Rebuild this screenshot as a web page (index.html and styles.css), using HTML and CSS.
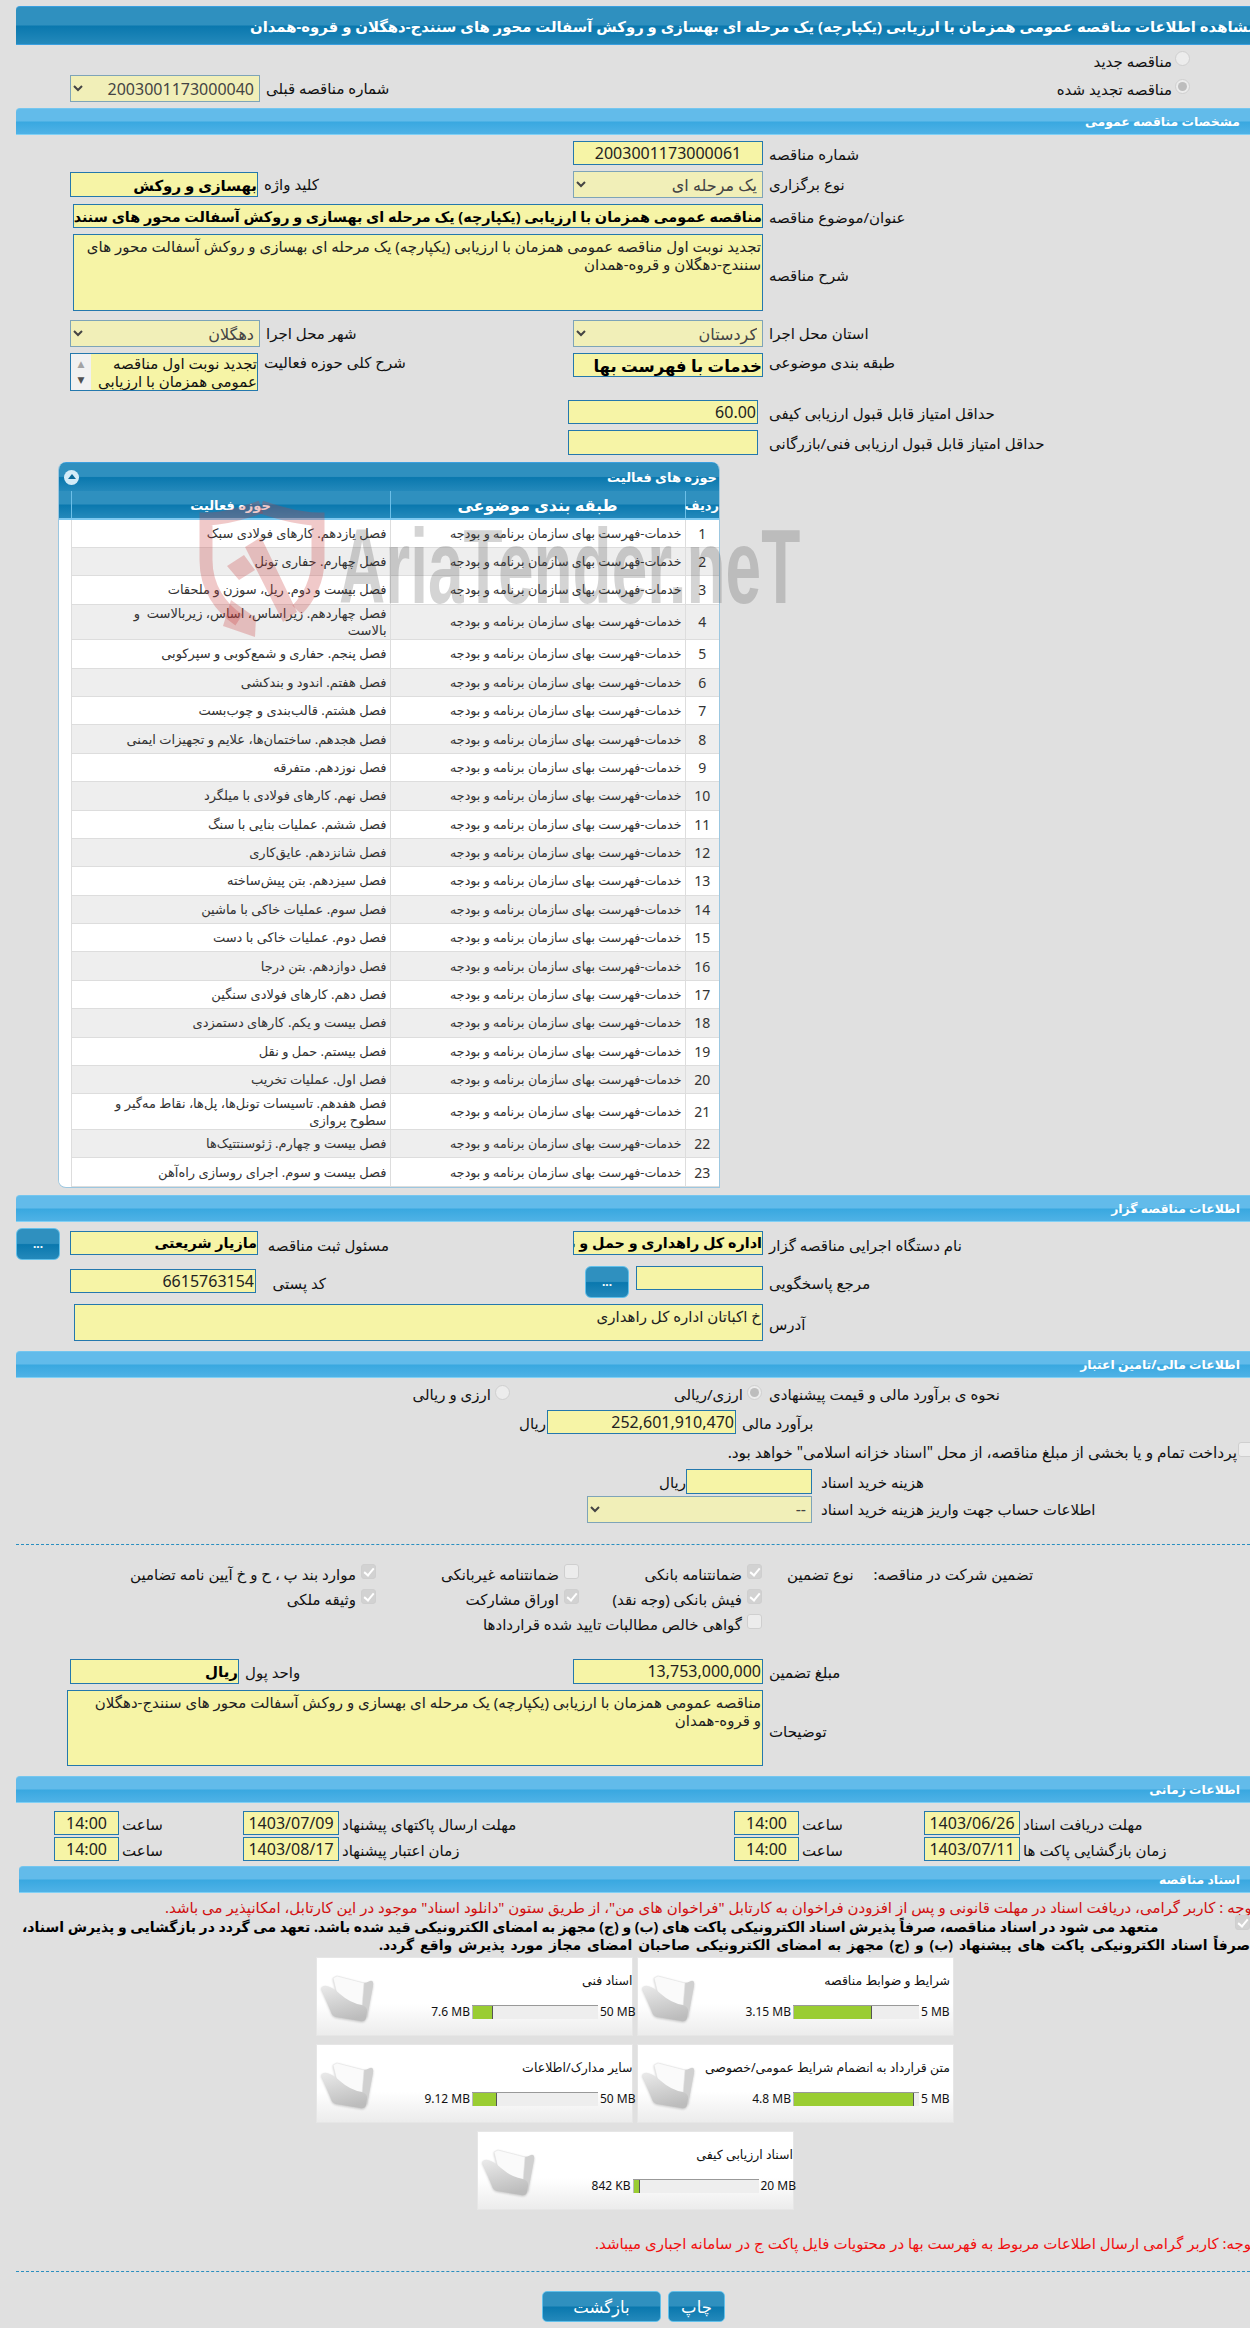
FILE: index.html
```html
<!DOCTYPE html>
<html lang="fa">
<head>
    <meta charset="UTF-8">
    <title>مشاهده اطلاعات مناقصه</title>
    <link rel="stylesheet" href="styles.css">
</head>
<body>

    <svg class="sprite" width="0" height="0">
        <defs>
            <linearGradient id="flap" x1="0.2" y1="0" x2="0.5" y2="1">
                <stop offset="0" stop-color="#e8e8e8"/>
                <stop offset="1" stop-color="#bcbcbc"/>
            </linearGradient>
        </defs>
        <symbol id="folder" viewBox="0 0 54 48">
            <path d="M18 3 L42 9 Q47 9 50 7 Q54 6 53 12 L47 44 L36 30 Z" fill="#d0d0d0"/>
            <path d="M13 4 L17 2 L44 9 L42 33 L18 24 Z" fill="#fafafa" stroke="#e2e2e2" stroke-width=".6"/>
            <path d="M1 14 Q3 11 7 12 Q14 14 20 20 Q30 29 42 31 Q48 33 47 38 L46 44 Q45 48 40 47 L16 43 Q12 42 11 38 Z" fill="url(#flap)"/>
        </symbol>
    </svg>

    <!-- Watermark -->
    <div class="watermark">
        <svg class="wm-shield" width="126" height="140" viewBox="0 0 126 140">
            <path d="M62 7 C45 13 22 19 7 19 L7 60 C7 88 22 108 40 120" fill="none" stroke="#c83c3c" stroke-opacity=".28" stroke-width="13"/>
            <path d="M62 7 C80 13 102 19 119 19 L119 60 C119 80 110 98 98 110" fill="none" stroke="#c83c3c" stroke-opacity=".28" stroke-width="13"/>
            <path d="M28 66 L45 55 L56 70 L40 80 Z M46 47 L62 37 L98 112 L84 122 Z M32 100 L57 118 L56 137 L24 126 Z" fill="#c83c3c" fill-opacity=".28"/>
        </svg>
        <div class="wm-text">AriaTender.neT</div>
    </div>

    <!-- Title -->
    <div class="title-bar"><span>مشاهده اطلاعات مناقصه عمومی همزمان با ارزیابی (یکپارچه) یک مرحله ای بهسازی و روکش آسفالت محور های سنندج-دهگلان و قروه-همدان</span></div>

    <div class="renew">
        <div class="row renew-row">
            <div class="cell-full"><span class="txt">مناقصه جدید</span><input class="radio" type="radio" disabled></div>
        </div>
        <div class="row renew-row2">
            <div class="cell-l">
                <select class="fld w190" dir="rtl" disabled><option>2003001173000040</option></select>
                <span class="lbl">شماره مناقصه قبلی</span>
            </div>
            <div class="cell-full cell-renew"><span class="txt">مناقصه تجدید شده</span><input class="radio" type="radio" checked disabled></div>
        </div>
    </div>

    <!-- General -->
    <div class="section-bar">مشخصات مناقصه عمومی</div>
    <div class="fields">
        <div class="row">
            <div class="cell-l"></div>
            <div class="cell-m"><input class="fld w190 center" dir="rtl" value="2003001173000061" readonly></div>
            <span class="lbl">شماره مناقصه</span>
        </div>
        <div class="row">
            <div class="cell-l">
                <input class="fld w188 strong tall mt1" dir="rtl" value="بهسازی و روکش" readonly>
                <span class="lbl">کلید واژه</span>
            </div>
            <div class="cell-m"><select class="fld w190" dir="rtl" disabled><option>یک مرحله ای</option></select></div>
            <span class="lbl">نوع برگزاری</span>
        </div>
        <div class="row">
            <div class="cell-wide"><input class="fld wfull strong strong-sm" dir="rtl" value="مناقصه عمومی همزمان با ارزیابی (یکپارچه) یک مرحله ای بهسازی و روکش آسفالت محور های سنندج-دهگلان و قروه-همدان" readonly></div>
            <span class="lbl">عنوان/موضوع مناقصه</span>
        </div>
        <div class="row row-area">
            <div class="cell-wide"><textarea class="fld wfull area1" dir="rtl" readonly>تجدید نوبت اول مناقصه عمومی همزمان با ارزیابی (یکپارچه) یک مرحله ای بهسازی و روکش آسفالت محور های سنندج-دهگلان و قروه-همدان</textarea></div>
            <span class="lbl">شرح مناقصه</span>
        </div>
        <div class="row gap9">
            <div class="cell-l">
                <select class="fld w190" dir="rtl" disabled><option>دهگلان</option></select>
                <span class="lbl">شهر محل اجرا</span>
            </div>
            <div class="cell-m"><select class="fld w190" dir="rtl" disabled><option>کردستان</option></select></div>
            <span class="lbl">استان محل اجرا</span>
        </div>
        <div class="row">
            <div class="cell-l">
                <div class="listbox">
                    <div class="fake-scroll"><span class="up">▲</span><span>▼</span></div>
                    <div class="listbox-text">تجدید نوبت اول مناقصه<br>عمومی همزمان با ارزیابی</div>
                </div>
                <span class="lbl lbl-top">شرح کلی حوزه فعالیت</span>
            </div>
            <div class="cell-m"><input class="fld w190 strong strong-lg" dir="rtl" value="خدمات با فهرست بها" readonly></div>
            <span class="lbl lbl-top">طبقه بندی موضوعی</span>
        </div>
        <div class="row gap9">
            <div class="cell-score"><input class="fld w190" dir="rtl" value="60.00" readonly></div>
            <span class="lbl">حداقل امتیاز قابل قبول ارزیابی کیفی</span>
        </div>
        <div class="row">
            <div class="cell-score"><input class="fld w190 tall" dir="rtl" readonly></div>
            <span class="lbl">حداقل امتیاز قابل قبول ارزیابی فنی/بازرگانی</span>
        </div>
    </div>

    <!-- Activity table -->
    <div class="panel">
        <div class="panel-head">
            <span class="toggle"></span>
            <span class="panel-title">حوزه های فعالیت</span>
        </div>
        <table class="activity">
            <thead>
                <tr>
                    <th class="c-blank"></th>
                    <th class="c-act">حوزه فعالیت</th>
                    <th class="c-cat">طبقه بندی موضوعی</th>
                    <th class="c-num">ردیف</th>
                </tr>
            </thead>
            <tbody>
                <tr><td></td><td>فصل یازدهم. کارهای فولادی سبک</td><td>خدمات-فهرست بهای سازمان برنامه و بودجه</td><td>1</td></tr>
                <tr><td></td><td>فصل چهارم. حفاری تونل</td><td>خدمات-فهرست بهای سازمان برنامه و بودجه</td><td>2</td></tr>
                <tr><td></td><td>فصل بیست و دوم. ریل، سوزن و ملحقات</td><td>خدمات-فهرست بهای سازمان برنامه و بودجه</td><td>3</td></tr>
                <tr class="two"><td></td><td>فصل چهاردهم. زیراساس، اساس، زیربالاست &nbsp;و<br>بالاست</td><td>خدمات-فهرست بهای سازمان برنامه و بودجه</td><td>4</td></tr>
                <tr><td></td><td>فصل پنجم. حفاری و شمع‌کوبی و سپرکوبی</td><td>خدمات-فهرست بهای سازمان برنامه و بودجه</td><td>5</td></tr>
                <tr><td></td><td>فصل هفتم. اندود و بندکشی</td><td>خدمات-فهرست بهای سازمان برنامه و بودجه</td><td>6</td></tr>
                <tr><td></td><td>فصل هشتم. قالب‌بندی و چوب‌بست</td><td>خدمات-فهرست بهای سازمان برنامه و بودجه</td><td>7</td></tr>
                <tr><td></td><td>فصل هجدهم. ساختمان‌ها، علایم و تجهیزات ایمنی</td><td>خدمات-فهرست بهای سازمان برنامه و بودجه</td><td>8</td></tr>
                <tr><td></td><td>فصل نوزدهم. متفرقه</td><td>خدمات-فهرست بهای سازمان برنامه و بودجه</td><td>9</td></tr>
                <tr><td></td><td>فصل نهم. کارهای فولادی با میلگرد</td><td>خدمات-فهرست بهای سازمان برنامه و بودجه</td><td>10</td></tr>
                <tr><td></td><td>فصل ششم. عملیات بنایی با سنگ</td><td>خدمات-فهرست بهای سازمان برنامه و بودجه</td><td>11</td></tr>
                <tr><td></td><td>فصل شانزدهم. عایق‌کاری</td><td>خدمات-فهرست بهای سازمان برنامه و بودجه</td><td>12</td></tr>
                <tr><td></td><td>فصل سیزدهم. بتن پیش‌ساخته</td><td>خدمات-فهرست بهای سازمان برنامه و بودجه</td><td>13</td></tr>
                <tr><td></td><td>فصل سوم. عملیات خاکی با ماشین</td><td>خدمات-فهرست بهای سازمان برنامه و بودجه</td><td>14</td></tr>
                <tr><td></td><td>فصل دوم. عملیات خاکی با دست</td><td>خدمات-فهرست بهای سازمان برنامه و بودجه</td><td>15</td></tr>
                <tr><td></td><td>فصل دوازدهم. بتن درجا</td><td>خدمات-فهرست بهای سازمان برنامه و بودجه</td><td>16</td></tr>
                <tr><td></td><td>فصل دهم. کارهای فولادی سنگین</td><td>خدمات-فهرست بهای سازمان برنامه و بودجه</td><td>17</td></tr>
                <tr><td></td><td>فصل بیست و یکم. کارهای دستمزدی</td><td>خدمات-فهرست بهای سازمان برنامه و بودجه</td><td>18</td></tr>
                <tr><td></td><td>فصل بیستم. حمل و نقل</td><td>خدمات-فهرست بهای سازمان برنامه و بودجه</td><td>19</td></tr>
                <tr><td></td><td>فصل اول. عملیات تخریب</td><td>خدمات-فهرست بهای سازمان برنامه و بودجه</td><td>20</td></tr>
                <tr class="two"><td></td><td>فصل هفدهم. تاسیسات تونل‌ها، پل‌ها، نقاط مه‌گیر و<br>سطوح پروازی</td><td>خدمات-فهرست بهای سازمان برنامه و بودجه</td><td>21</td></tr>
                <tr><td></td><td>فصل بیست و چهارم. ژئوسنتتیک‌ها</td><td>خدمات-فهرست بهای سازمان برنامه و بودجه</td><td>22</td></tr>
                <tr><td></td><td>فصل بیست و سوم. اجرای روسازی راه‌آهن</td><td>خدمات-فهرست بهای سازمان برنامه و بودجه</td><td>23</td></tr>
            </tbody>
        </table>
    </div>

    <!-- Organizer -->
    <div class="section-bar bar-org">اطلاعات مناقصه گزار</div>
    <div class="org">
        <div class="row org-r1">
            <button class="dots btn-left">...</button>
            <input class="fld w188 strong strong-sm" dir="rtl" value="مازیار شریعتی" readonly>
            <span class="lbl lbl-org1">مسئول ثبت مناقصه</span>
            <div class="org-spacer1"></div>
            <input class="fld w190 strong strong-sm" dir="rtl" value="اداره کل راهداری و حمل و نقل جاده ای استان کردستان" readonly>
            <span class="lbl">نام دستگاه اجرایی مناقصه گزار</span>
        </div>
        <div class="row org-r2">
            <input class="fld w186 org-postal" dir="rtl" value="6615763154" readonly>
            <span class="lbl lbl-org2">کد پستی</span>
            <div class="org-spacer2"></div>
            <button class="dots">...</button>
            <input class="fld w127" dir="rtl" readonly>
            <span class="lbl">مرجع پاسخگویی</span>
        </div>
        <div class="row">
            <div class="cell-addr"><textarea class="fld wfull area2" dir="rtl" readonly>خ اکباتان اداره کل راهداری</textarea></div>
            <span class="lbl lbl-addr">آدرس</span>
        </div>
    </div>

    <!-- Finance -->
    <div class="section-bar bar-fin">اطلاعات مالی/تامین اعتبار</div>
    <div class="finance">
        <div class="row fin-method">
            <div class="cell-radios">
                <div class="opt"><span class="txt">ارزی و ریالی</span><input class="radio" type="radio" disabled></div>
                <div class="opt"><span class="txt">ارزی/ریالی</span><input class="radio" type="radio" checked disabled></div>
            </div>
            <span class="lbl">نحوه ی برآورد مالی و قیمت پیشنهادی</span>
        </div>
        <div class="row fin-amount">
            <span class="txt unit">ریال</span>
            <input class="fld w189" dir="rtl" value="252,601,910,470" readonly>
            <span class="lbl">برآورد مالی</span>
        </div>
        <div class="fin-islamic">
            <span class="txt">پرداخت تمام و یا بخشی از مبلغ مناقصه، از محل "اسناد خزانه اسلامی" خواهد بود.</span>
            <input class="check" type="checkbox" disabled>
        </div>
        <div class="row fin-cost">
            <span class="txt unit">ریال</span>
            <input class="fld w126 tall" dir="rtl" readonly>
            <span class="lbl lbl-cost">هزینه خرید اسناد</span>
        </div>
        <div class="row fin-account">
            <select class="fld w225" dir="rtl" disabled><option>--</option></select>
            <span class="lbl lbl-cost">اطلاعات حساب جهت واریز هزینه خرید اسناد</span>
        </div>
    </div>
    <div class="dash-line"></div>

    <!-- Guarantee -->
    <div class="guarantee">
        <div class="g-grid">
            <div class="opt"><span class="txt">موارد بند پ ، ح و خ آیین نامه تضامین</span><input class="check" type="checkbox" checked disabled></div>
            <div class="opt"><span class="txt">ضمانتنامه غیربانکی</span><input class="check" type="checkbox" disabled></div>
            <div class="opt"><span class="txt">ضمانتنامه بانکی</span><input class="check" type="checkbox" checked disabled></div>
            <div class="opt"><span class="txt">وثیقه ملکی</span><input class="check" type="checkbox" checked disabled></div>
            <div class="opt"><span class="txt">اوراق مشارکت</span><input class="check" type="checkbox" checked disabled></div>
            <div class="opt"><span class="txt">فیش بانکی (وجه نقد)</span><input class="check" type="checkbox" checked disabled></div>
            <div class="g-wide opt"><span class="txt">گواهی خالص مطالبات تایید شده قراردادها</span><input class="check" type="checkbox" disabled></div>
        </div>
        <span class="txt g-type">نوع تضمین</span>
        <span class="txt g-head">تضمین شرکت در مناقصه:</span>
    </div>

    <div class="fields g-fields">
        <div class="row">
            <div class="cell-l">
                <input class="fld w169 strong tall" dir="rtl" value="ریال" readonly>
                <span class="lbl">واحد پول</span>
            </div>
            <div class="cell-m"><input class="fld w190 tall" dir="rtl" value="13,753,000,000" readonly></div>
            <span class="lbl">مبلغ تضمین</span>
        </div>
        <div class="row">
            <div class="cell-desc"><textarea class="fld wfull area3" dir="rtl" readonly>مناقصه عمومی همزمان با ارزیابی (یکپارچه) یک مرحله ای بهسازی و روکش آسفالت محور های سنندج-دهگلان
و قروه-همدان</textarea></div>
            <span class="lbl lbl-desc">توضیحات</span>
        </div>
    </div>

    <!-- Dates -->
    <div class="section-bar bar-time">اطلاعات زمانی</div>
    <div class="times">
        <div class="t-row">
            <div class="t-cell"><input class="fld w65" value="14:00" readonly><span class="lbl">ساعت</span></div>
            <div class="t-cell"><input class="fld w96" value="1403/07/09" readonly><span class="lbl">مهلت ارسال پاکتهای پیشنهاد</span></div>
            <div class="t-cell"><input class="fld w65" value="14:00" readonly><span class="lbl">ساعت</span></div>
            <div class="t-cell"><input class="fld w96" value="1403/06/26" readonly><span class="lbl">مهلت دریافت اسناد</span></div>
        </div>
        <div class="t-row">
            <div class="t-cell"><input class="fld w65" value="14:00" readonly><span class="lbl">ساعت</span></div>
            <div class="t-cell"><input class="fld w96" value="1403/08/17" readonly><span class="lbl">زمان اعتبار پیشنهاد</span></div>
            <div class="t-cell"><input class="fld w65" value="14:00" readonly><span class="lbl">ساعت</span></div>
            <div class="t-cell"><input class="fld w96" value="1403/07/11" readonly><span class="lbl">زمان بازگشایی پاکت ها</span></div>
        </div>
    </div>

    <!-- Documents -->
    <div class="section-bar bar-docs">اسناد مناقصه</div>
    <div class="note-line note-red"><span>توجه : کاربر گرامی، دریافت اسناد در مهلت قانونی و پس از افزودن فراخوان به کارتابل "فراخوان های من"، از طریق ستون "دانلود اسناد" موجود در این کارتابل، امکانپذیر می باشد.</span></div>
    <div class="pledge">
        <div class="pledge-l1"><span>متعهد می شود در اسناد مناقصه، صرفاً پذیرش اسناد الکترونیکی پاکت های (ب) و (ج) مجهز به امضای الکترونیکی قید شده باشد. تعهد می گردد در بازگشایی و پذیرش اسناد،</span><input class="check" type="checkbox" checked disabled></div>
        <div class="pledge-l2"><span>صرفاً اسناد الکترونیکی پاکت های پیشنهاد (ب) و (ج) مجهز به امضای الکترونیکی صاحبان امضای مجاز مورد پذیرش واقع گردد.</span></div>
    </div>

    <div class="files">
        <div class="file">
            <svg class="file-icon"><use href="#folder"/></svg>
            <div class="file-name">شرایط و ضوابط مناقصه</div>
            <span class="file-used">3.15 MB</span>
            <div class="meter"><div class="meter-fill" style="width: 63%"></div></div>
            <span class="file-max">5 MB</span>
        </div>
        <div class="file">
            <svg class="file-icon"><use href="#folder"/></svg>
            <div class="file-name">اسناد فنی</div>
            <span class="file-used">7.6 MB</span>
            <div class="meter"><div class="meter-fill" style="width: 17%"></div></div>
            <span class="file-max">50 MB</span>
        </div>
        <div class="file">
            <svg class="file-icon"><use href="#folder"/></svg>
            <div class="file-name">متن قرارداد به انضمام شرایط عمومی/خصوصی</div>
            <span class="file-used">4.8 MB</span>
            <div class="meter"><div class="meter-fill" style="width: 96%"></div></div>
            <span class="file-max">5 MB</span>
        </div>
        <div class="file">
            <svg class="file-icon"><use href="#folder"/></svg>
            <div class="file-name">سایر مدارک/اطلاعات</div>
            <span class="file-used">9.12 MB</span>
            <div class="meter"><div class="meter-fill" style="width: 20%"></div></div>
            <span class="file-max">50 MB</span>
        </div>
        <div class="file">
            <svg class="file-icon"><use href="#folder"/></svg>
            <div class="file-name">اسناد ارزیابی کیفی</div>
            <span class="file-used">842 KB</span>
            <div class="meter"><div class="meter-fill" style="width: 6%"></div></div>
            <span class="file-max">20 MB</span>
        </div>
    </div>

    <div class="note-line note-last"><span>توجه: کاربر گرامی ارسال اطلاعات مربوط به فهرست بها در محتویات فایل پاکت ج در سامانه اجباری میباشد.</span></div>
    <div class="dash-line dash-end"></div>

    <div class="actions">
        <button class="act act-back">بازگشت</button>
        <button class="act act-print">چاپ</button>
    </div>

</body>
</html>
```

FILE: styles.css
```css
html {
    background-color: #fff;
}

body {
    margin: 0;
    width: 1250px;
    height: 2328px;
    overflow: hidden;
    position: relative;
    background-color: #e0e0e0;
    font-family: "Noto Sans", "DejaVu Sans", sans-serif;
    font-size: 15px;
    color: #111;
}

.sprite {
    position: absolute;
}

/* watermark over the table */
.watermark {
    position: absolute;
    left: 199px;
    top: 500px;
    width: 610px;
    height: 140px;
    z-index: 5;
    pointer-events: none;
}

.wm-shield {
    position: absolute;
    left: 0;
    top: 0;
}

.wm-text {
    position: absolute;
    left: 140px;
    top: 6px;
    font-family: "Liberation Sans", sans-serif;
    font-weight: bold;
    font-size: 106px;
    line-height: 120px;
    white-space: nowrap;
    color: rgba(60, 60, 60, 0.22);
    transform-origin: left top;
    transform: scaleX(0.604);
}

/* bars */
.title-bar {
    display: flex;
    align-items: center;
    box-sizing: border-box;
    height: 39px;
    margin: 6px 0 0 16px;
    padding-left: 234px;
    border-top: 1px solid #3a9fdf;
    border-bottom: 1px solid #3a9fdf;
    border-top-left-radius: 4px;
    background: linear-gradient(#2f90bf 0, #2f90bf 48%, #0a78ae 52%, #2489bb 100%);
    color: #fff;
    font-size: 14.85px;
    font-weight: bold;
}

.title-bar span {
    flex-shrink: 0;
    white-space: nowrap;
    direction: rtl;
}

.section-bar {
    box-sizing: border-box;
    height: 27px;
    margin-left: 16px;
    padding: 4px 10px 0 0;
    border-top: 1px solid #74c6ef;
    border-bottom: 1px solid #80d0f5;
    border-top-left-radius: 4px;
    background: linear-gradient(#62bbea 0, #62bbea 48%, #39a8e0 52%, #4fb2e6 100%);
    color: #fff;
    font-size: 12.4px;
    font-weight: bold;
    text-align: right;
    direction: rtl;
}

.bar-org {
    margin-top: 7px;
}

.bar-fin {
    margin-top: 10px;
}

.bar-time {
    margin-top: 10px;
}

.bar-docs {
    margin: 3px 0 0 19px;
}

/* form rows */
.row {
    display: flex;
    align-items: flex-start;
}

.fields {
    display: flex;
    flex-direction: column;
    gap: 6px;
    padding-top: 6px;
}

.cell-l {
    display: flex;
    align-items: flex-start;
    box-sizing: border-box;
    width: 573px;
    padding-left: 70px;
}

.cell-m {
    width: 190px;
}

.cell-wide {
    box-sizing: border-box;
    width: 763px;
    padding-left: 73px;
}

.cell-score {
    box-sizing: border-box;
    width: 763px;
    padding: 0 5px 0 568px;
}

.cell-addr {
    box-sizing: border-box;
    width: 763px;
    padding-left: 74px;
}

.cell-desc {
    box-sizing: border-box;
    width: 763px;
    padding-left: 67px;
}

.gap9 {
    margin-top: 3px;
}

.lbl {
    margin-left: 6px;
    padding-top: 3px;
    white-space: nowrap;
    direction: rtl;
}

.lbl-top {
    padding-top: 0;
    margin-top: -1px;
}

.txt {
    white-space: nowrap;
    direction: rtl;
}

.row-area .lbl {
    padding-top: 31px;
}

.fld {
    box-sizing: border-box;
    height: 24px;
    margin: 0;
    padding: 0 1px;
    border: 1px solid #2478ad;
    border-radius: 0;
    background-color: #f6f4a6;
    color: #222;
    font-family: "Noto Sans", "DejaVu Sans", sans-serif;
    font-size: 16px;
    outline: none;
    resize: none;
}

select.fld {
    height: 27px;
    border-color: #7ea4b8;
    background-color: #f1efb8;
    color: #444;
    font-size: 16px;
    opacity: 1;
}

textarea.fld {
    display: block;
    font-size: 15px;
    line-height: 18px;
    padding: 2px 1px;
    overflow: hidden;
}

.strong {
    padding: 0;
    font-size: 15px;
    font-weight: bold;
    color: #000;
}

.strong-sm {
    font-size: 14.4px;
}

.strong-lg {
    font-size: 16.5px;
}

.center {
    text-align: center;
}

.mt1 {
    margin-top: 1px;
}

.tall {
    height: 25px;
}

.w65 { width: 65px; font-size: 16px; text-align: center; }
.w96 { width: 96px; font-size: 16px; text-align: center; }
.w126 { width: 126px; }
.w127 { width: 127px; }
.w169 { width: 169px; }
.w186 { width: 186px; }
.w188 { width: 188px; }
.w189 { width: 189px; }
.w190 { width: 190px; }
.w225 { width: 225px; }
.wfull { width: 100%; }

.area1 {
    height: 77px;
}

.area2 {
    height: 37px;
}

.area3 {
    height: 76px;
}

.listbox {
    display: flex;
    box-sizing: border-box;
    width: 188px;
    height: 38px;
    border: 1px solid #2478ad;
    background-color: #f6f4a6;
    overflow: hidden;
}

.fake-scroll {
    display: flex;
    flex-direction: column;
    justify-content: space-between;
    flex-shrink: 0;
    width: 20px;
    padding: 3px 0;
    box-sizing: border-box;
    background-color: #f1f1f1;
    color: #505050;
    font-size: 9px;
    line-height: 14px;
    text-align: center;
}

.fake-scroll .up {
    color: #a3a3a3;
}

.listbox-text {
    flex: 1;
    line-height: 18px;
    white-space: nowrap;
    text-align: right;
    direction: rtl;
}

.radio,
.check {
    appearance: none;
    box-sizing: border-box;
    flex-shrink: 0;
    width: 15px;
    height: 15px;
    margin: 0;
    position: relative;
    border: 1px solid #cfcfcf;
    background-color: #ececec;
}

.radio {
    border-radius: 50%;
}

.radio:checked::after {
    content: "";
    position: absolute;
    left: 2px;
    top: 2px;
    width: 9px;
    height: 9px;
    border-radius: 50%;
    background-color: #bdbdbd;
}

.check {
    border-radius: 3px;
}

.check:checked {
    background-color: #d2d2d2;
}

.check:checked::after {
    content: "";
    position: absolute;
    left: 4px;
    top: 1px;
    width: 4px;
    height: 8px;
    border: solid #fff;
    border-width: 0 2px 2px 0;
    transform: rotate(40deg);
}

/* renew options */
.renew {
    height: 63px;
    padding-top: 6px;
    box-sizing: border-box;
}

.renew-row {
    height: 24px;
    justify-content: flex-end;
    padding-right: 60px;
}

.renew-row2 {
    height: 27px;
}

.cell-full {
    display: flex;
    align-items: flex-start;
    gap: 3px;
}

.cell-renew {
    margin-left: auto;
    margin-right: 60px;
    padding-top: 4px;
}

/* activity panel */
.panel {
    width: 662px;
    margin: 7px 0 0 58px;
    border: 1px solid #9cc7e0;
    border-top: 0;
    border-radius: 8px 8px 0 8px;
    background-color: #fff;
    overflow: hidden;
    box-sizing: border-box;
}

.panel-head {
    display: flex;
    align-items: center;
    justify-content: space-between;
    box-sizing: border-box;
    height: 29px;
    padding: 0 2px 0 5px;
    border-top: 1px solid #3a9fdf;
    background: linear-gradient(#2f90bf 0, #2f90bf 48%, #0a78ae 52%, #2489bb 100%);
}

.panel-title {
    color: #fff;
    font-size: 13px;
    font-weight: bold;
    direction: rtl;
}

.toggle {
    position: relative;
    width: 15px;
    height: 15px;
    border-radius: 50%;
    background-color: #d4ecf8;
}

.toggle::after {
    content: "";
    position: absolute;
    left: 4px;
    top: 4px;
    border-left: 4px solid transparent;
    border-right: 4px solid transparent;
    border-bottom: 5px solid #0a6a9a;
}

.activity {
    width: 100%;
    border-collapse: collapse;
    table-layout: fixed;
}

.activity th {
    box-sizing: border-box;
    height: 28px;
    padding: 0;
    border-left: 1px solid #6cbfe8;
    border-bottom: 2px solid #7cc8f0;
    background: linear-gradient(#2f90bf 0, #2f90bf 48%, #0a78ae 52%, #2489bb 100%);
    color: #fff;
    font-size: 13px;
    font-weight: bold;
    direction: rtl;
}

.activity th:first-child {
    border-left: 0;
}

.c-blank { width: 12px; }
.c-act { width: 319px; }

.activity th.c-cat {
    width: 295px;
    font-size: 16px;
}

.activity td {
    box-sizing: border-box;
    height: 28.4px;
    padding: 0 3px 0 2px;
    border-left: 1px solid #ddd;
    border-bottom: 1px solid #ddd;
    font-size: 13px;
    line-height: 17px;
    color: #333;
    text-align: right;
    direction: rtl;
    white-space: nowrap;
}

.activity td:nth-child(3) {
    font-size: 12.7px;
}

.activity td:first-child {
    border-left: 0;
    background-color: #fff;
    border-bottom: 0;
}

.activity td:last-child {
    padding: 0;
    text-align: center;
    font-size: 14px;
}

.activity tbody tr:nth-child(even) td {
    background-color: #eee;
}

.activity tbody tr:nth-child(even) td:first-child {
    background-color: #fff;
}

.activity tr.two td {
    height: 35.5px;
}

/* organizer */
.org {
    padding-top: 6px;
}

.org-r1 {
    height: 38px;
    padding-left: 16px;
    box-sizing: border-box;
}

.dots {
    box-sizing: border-box;
    flex-shrink: 0;
    width: 44px;
    height: 32px;
    padding: 0;
    border: 1px solid #62c0ea;
    border-radius: 6px;
    background: linear-gradient(#2f90bf 0, #2f90bf 48%, #0a78ae 52%, #2489bb 100%);
    color: #fff;
    font-family: inherit;
    font-size: 12px;
    font-weight: bold;
}

.btn-left {
    margin: 0 10px 0 0;
}

.org-r1 .fld {
    margin-top: 3px;
}

.org-r1 .lbl {
    padding-top: 7px;
}

.lbl-org1 {
    width: 125px;
}

.org-spacer1 {
    width: 184px;
}

.org-r2 {
    height: 38px;
    padding-left: 70px;
    box-sizing: border-box;
}

.org-postal {
    margin-top: 3px;
}

.org-r2 .lbl {
    padding-top: 7px;
}

.org-r2 .lbl-org2 {
    margin-left: 10px;
    width: 60px;
}

.org-spacer2 {
    width: 259px;
}

.org-r2 .dots {
    margin-right: 7px;
}

.lbl-addr {
    padding-top: 10px;
}

/* finance */
.fin-method {
    height: 32px;
    padding-top: 7px;
    box-sizing: border-box;
}

.cell-radios {
    display: flex;
    justify-content: flex-end;
    gap: 164px;
    width: 762px;
    margin-right: 1px;
}

.opt {
    display: flex;
    justify-content: flex-end;
    align-items: flex-start;
    gap: 4px;
}

.fin-method .txt {
    margin-top: -1px;
}

.fin-method .lbl {
    padding-top: 0;
    margin-top: -1px;
}

.fin-amount {
    height: 24px;
    padding-left: 519px;
    box-sizing: border-box;
}

.unit {
    width: 28px;
    padding-top: 3px;
    text-align: left;
}

.fin-islamic {
    display: flex;
    justify-content: flex-end;
    align-items: flex-start;
    gap: 1px;
    height: 35px;
    padding-top: 8px;
    box-sizing: border-box;
    margin-right: -3px;
}

.fin-islamic .txt {
    font-size: 15.4px;
}

.fin-cost {
    height: 27px;
    padding-left: 662px;
    box-sizing: border-box;
}

.fin-cost .unit {
    width: 24px;
}

.lbl-cost {
    margin-left: 9px;
}

.fin-account {
    padding-left: 587px;
}

.dash-line {
    height: 0;
    margin: 21px 0 0 16px;
    border-top: 1px dashed #2a8fc0;
}

.dash-end {
    margin: 17px 0 0 16px;
}

/* guarantee */
.guarantee {
    display: flex;
    align-items: flex-start;
    height: 108px;
    padding-top: 19px;
    box-sizing: border-box;
}

.g-grid {
    display: grid;
    grid-template-columns: 376px 203px 183px;
    grid-auto-rows: 25px;
}

.g-grid .opt {
    gap: 5px;
}

.g-wide {
    grid-column: 1 / 4;
}

.g-type {
    margin-left: 25px;
}

.g-head {
    margin-left: 20px;
}

.g-fields .lbl-desc {
    padding-top: 31px;
}

/* dates */
.times {
    padding-top: 8px;
}

.t-row {
    display: grid;
    grid-template-columns: 189px 491px 190px 1fr;
    padding-left: 54px;
    height: 26px;
}

.t-cell {
    display: flex;
    align-items: flex-start;
}

.t-cell .lbl {
    margin-left: 3px;
}

/* documents */
.note-line {
    display: flex;
    white-space: nowrap;
    height: 21px;
}

.note-line span {
    flex-shrink: 0;
    direction: rtl;
}

.note-red {
    margin-top: 4px;
    padding-left: 165px;
    color: #d01010;
    align-items: center;
}

.pledge {
    font-size: 14px;
    font-weight: bold;
    color: #000;
    line-height: 18px;
}

.pledge-l1 {
    display: flex;
    justify-content: space-between;
    padding-left: 22px;
    white-space: nowrap;
}

.pledge-l1 span {
    direction: rtl;
}

.pledge-l1 .check {
    margin-top: -3px;
}

.pledge-l2 {
    display: flex;
    padding-left: 379px;
    white-space: nowrap;
    word-spacing: 2.2px;
}

.pledge-l2 span {
    flex-shrink: 0;
    direction: rtl;
}

.files {
    display: flex;
    flex-direction: row-reverse;
    flex-wrap: wrap;
    justify-content: center;
    gap: 8px 4px;
    width: 638px;
    margin: 3px 0 0 316px;
}

.file {
    box-sizing: border-box;
    display: grid;
    grid-template-columns: 153px 126px 1fr;
    grid-template-rows: 33px 14px;
    column-gap: 2px;
    align-items: center;
    width: 317px;
    height: 79px;
    padding-top: 14px;
    border: 1px solid #e6e6e6;
    background: linear-gradient(#fff 60%, #ececec 100%);
}

.file-icon {
    grid-column: 1;
    grid-row: 1 / 3;
    align-self: start;
    width: 54px;
    height: 48px;
    margin: 2px 0 0 3px;
    filter: drop-shadow(0 1px 1px rgba(0, 0, 0, 0.2));
}

.file-name {
    grid-column: 1 / 4;
    grid-row: 1;
    align-self: start;
    padding-right: 3px;
    font-size: 12.5px;
    text-align: right;
    direction: rtl;
}

.file-used {
    grid-column: 1;
    grid-row: 2;
    justify-self: end;
    font-size: 12px;
    white-space: nowrap;
}

.file-max {
    grid-column: 3;
    grid-row: 2;
    font-size: 12px;
    white-space: nowrap;
}

.meter {
    grid-column: 2;
    grid-row: 2;
    height: 14px;
    box-sizing: border-box;
    border-top: 1px solid #999;
    background-color: #eee;
}

.meter-fill {
    box-sizing: border-box;
    height: 100%;
    border-right: 1px solid #555;
    border-left: 1px solid #bbb;
    background-color: #9acd32;
}

.note-last {
    margin-top: 23px;
    padding-left: 595px;
    color: #f01010;
}

.actions {
    display: flex;
    gap: 7px;
    margin: 19px 0 0 542px;
}

.act {
    box-sizing: border-box;
    height: 31px;
    padding: 0;
    border: 1px solid #62c0ea;
    border-radius: 5px;
    background: linear-gradient(#2f90bf 0, #2f90bf 48%, #0a78ae 52%, #2489bb 100%);
    color: #fff;
    font-family: inherit;
    font-size: 16.5px;
}

.act-back {
    width: 119px;
}

.act-print {
    width: 57px;
}
```
